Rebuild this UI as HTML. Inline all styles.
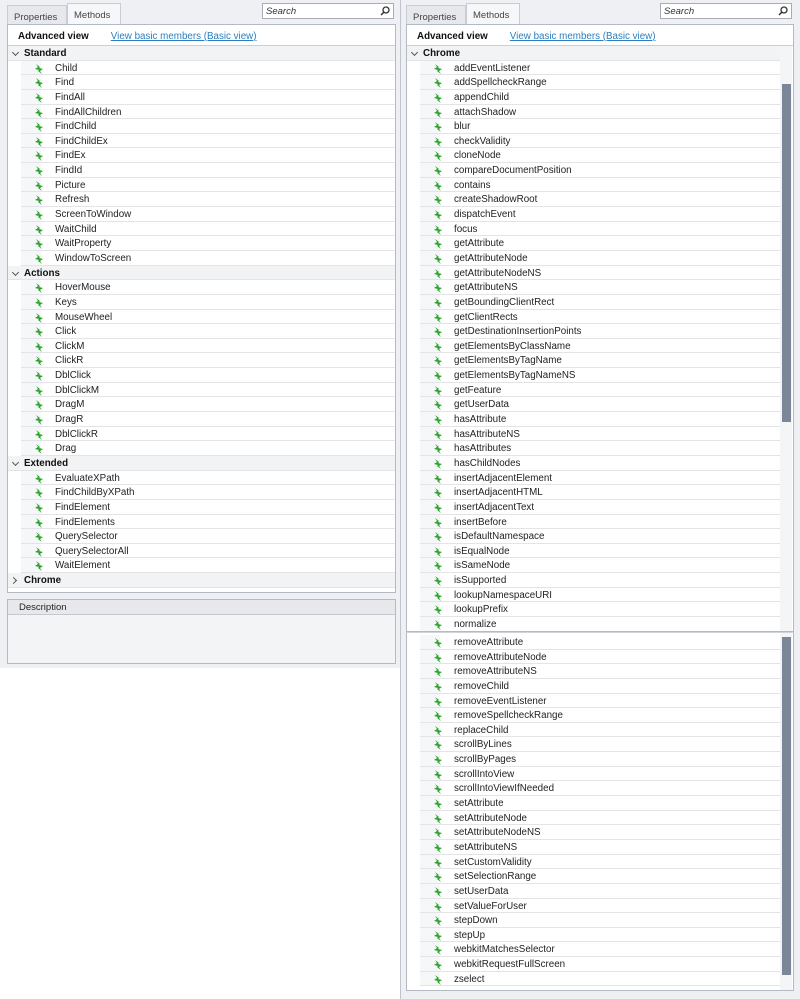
<!DOCTYPE html>
<html><head><meta charset="utf-8"><style>
*{margin:0;padding:0;box-sizing:border-box}
body{width:800px;height:999px;background:#fff;font-family:"Liberation Sans",sans-serif;font-size:9.8px;color:#222;position:relative;overflow:hidden}
.p{position:absolute;background:#eef0f3}
.tab{position:absolute;top:5px;height:20px;border:1px solid #c8ccd4;border-bottom:none;background:#e6e8ec;padding:6px 6px 0;font-size:9.5px;color:#444}
.tab.a{top:3px;height:22px;background:#f6f7f9}
.search{position:absolute;top:3px;height:16px;width:132px;border:1px solid #a8acb4;background:#fff;font-style:italic;font-size:9.5px;padding:2px 3px;color:#333}
.search svg{position:absolute;right:3px;top:2px}
.box{position:absolute;border:1px solid #b4bac4;background:#fff}
.hdr{height:21px;border-bottom:1px solid #ccd;padding:6px 0 0 10px;font-weight:bold;font-size:9.8px;color:#111}
.hdr a{font-weight:normal;color:#2a7fc0;text-decoration:underline;margin-left:22px}
.r{height:14.65px;line-height:16px;border-bottom:1px solid #e2e4e8;position:relative;white-space:nowrap}
.g{font-weight:bold;background:#f2f3f5;padding-left:16px;color:#111}
.g:before{content:"";position:absolute;left:5px;top:4px;width:4px;height:4px;border-right:1px solid #555;border-bottom:1px solid #555;transform:rotate(45deg)}
.g.c:before{transform:rotate(-45deg);left:3px;top:5px}
.i{padding-left:34px;margin-left:13px;background:linear-gradient(90deg,#f6f7f8 0 20px,#fff 20px)}
.i svg{position:absolute;left:13px;top:3px}
.sb{position:absolute;width:12px;background:#f4f5f7}
.th{position:absolute;left:2px;width:9px;background:#7b8699}
</style></head><body>
<svg width="0" height="0" style="position:absolute"><defs><symbol id="z" viewBox="0 0 10 10"><polygon points="2,0 6,3 5,4 9,5 6,7 8,10 4,7 5,6 1,5 4,3" fill="#2aa52a"/></symbol></defs></svg>

<!-- LEFT -->
<div class="p" style="left:0;top:0;width:400px;height:668px"></div>
<div class="tab" style="left:7px;width:60px">Properties</div>
<div class="tab a" style="left:67px;width:54px">Methods</div>
<div class="search" style="left:262px">Search<svg width="10" height="10" viewBox="0 0 10 10"><circle cx="6" cy="4" r="3" fill="none" stroke="#333" stroke-width="1.3"/><line x1="4" y1="6" x2="1" y2="9" stroke="#333" stroke-width="1.5"/></svg></div>
<div class="box" style="left:7px;top:24px;width:389px;height:569px">
<div class="hdr">Advanced view<a>View basic members (Basic view)</a></div>
<div class="r g">Standard</div>
<div id="L1"></div>
</div>
<div class="box" style="left:7px;top:599px;width:389px;height:65px;background:#f3f4f6">
<div style="height:15px;border-bottom:1px solid #c4c8d0;background:#e6e8ec;padding:2px 0 0 11px;font-size:9.5px">Description</div></div>

<!-- RIGHT -->
<div class="p" style="left:400px;top:0;width:400px;height:999px"></div>
<div style="position:absolute;left:400px;top:0;width:1px;height:999px;background:#c0c4cc"></div>
<div class="tab" style="left:406px;width:60px">Properties</div>
<div class="tab a" style="left:466px;width:54px">Methods</div>
<div class="search" style="left:660px">Search<svg width="10" height="10" viewBox="0 0 10 10"><circle cx="6" cy="4" r="3" fill="none" stroke="#333" stroke-width="1.3"/><line x1="4" y1="6" x2="1" y2="9" stroke="#333" stroke-width="1.5"/></svg></div>
<div class="box" style="left:406px;top:24px;width:388px;height:608px;overflow:hidden">
<div class="hdr">Advanced view<a>View basic members (Basic view)</a></div>
<div style="width:373px"><div class="r g">Chrome</div><div id="R1"></div></div>
<div class="sb" style="left:373px;top:21px;height:587px"><div class="th" style="top:38px;height:338px"></div></div>
</div>
<div class="box" style="left:406px;top:632px;width:388px;height:359px;overflow:hidden;border-top:1px solid #d0d4da">
<div style="width:373px;padding-top:2px"><div id="R2"></div></div>
<div class="sb" style="left:373px;top:0;height:357px"><div class="th" style="top:4px;height:338px"></div></div>
</div>

<script>
function f(id,arr){var h="";arr.forEach(function(s){if(s[0]=="#"){var c=s[1]=="+";h+='<div class="r g'+(c?' c':'')+'" style="margin-left:0">'+s.slice(2)+'</div>';}else h+='<div class="r i"><svg width="10" height="10"><use href="#z"/></svg>'+s+'</div>';});document.getElementById(id).outerHTML=h;}
f("L1",["Child","Find","FindAll","FindAllChildren","FindChild","FindChildEx","FindEx","FindId","Picture","Refresh","ScreenToWindow","WaitChild","WaitProperty","WindowToScreen","#-Actions","HoverMouse","Keys","MouseWheel","Click","ClickM","ClickR","DblClick","DblClickM","DragM","DragR","DblClickR","Drag","#-Extended","EvaluateXPath","FindChildByXPath","FindElement","FindElements","QuerySelector","QuerySelectorAll","WaitElement","#+Chrome"]);
f("R1",["addEventListener","addSpellcheckRange","appendChild","attachShadow","blur","checkValidity","cloneNode","compareDocumentPosition","contains","createShadowRoot","dispatchEvent","focus","getAttribute","getAttributeNode","getAttributeNodeNS","getAttributeNS","getBoundingClientRect","getClientRects","getDestinationInsertionPoints","getElementsByClassName","getElementsByTagName","getElementsByTagNameNS","getFeature","getUserData","hasAttribute","hasAttributeNS","hasAttributes","hasChildNodes","insertAdjacentElement","insertAdjacentHTML","insertAdjacentText","insertBefore","isDefaultNamespace","isEqualNode","isSameNode","isSupported","lookupNamespaceURI","lookupPrefix","normalize"]);
f("R2",["removeAttribute","removeAttributeNode","removeAttributeNS","removeChild","removeEventListener","removeSpellcheckRange","replaceChild","scrollByLines","scrollByPages","scrollIntoView","scrollIntoViewIfNeeded","setAttribute","setAttributeNode","setAttributeNodeNS","setAttributeNS","setCustomValidity","setSelectionRange","setUserData","setValueForUser","stepDown","stepUp","webkitMatchesSelector","webkitRequestFullScreen","zselect"]);
</script>
</body></html>
